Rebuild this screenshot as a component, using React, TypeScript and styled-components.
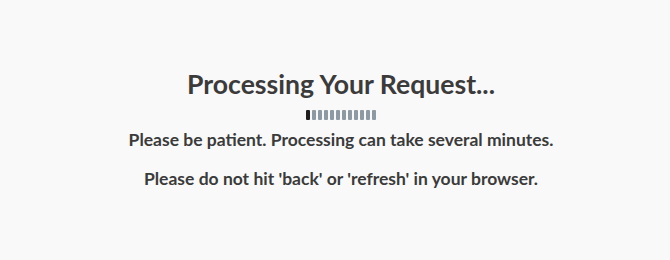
import React from 'react';
import styled, { createGlobalStyle } from 'styled-components';

const GlobalStyle = createGlobalStyle`
  html, body {
    margin: 0;
    padding: 0;
    background: #f9f9f9;
  }
  body {
    font-family: Lato, "Liberation Sans", sans-serif;
  }
`;

const Page = styled.div`
  height: 260px;
  display: flex;
  flex-direction: column;
  align-items: center;
  padding: 66px 0 0 12px;
  box-sizing: border-box;
  color: #3b3b3b;
`;

const Title = styled.h1`
  margin: 0;
  font-size: 26.6px;
  font-weight: 700;
  line-height: 36px;
`;

const Loader = styled.div`
  display: flex;
  gap: 2px;
  margin-top: 8px;
`;

const Bar = styled.span<{ $active?: boolean }>`
  width: 4px;
  height: 10px;
  border-radius: 1px;
  background: ${p => (p.$active ? '#1f1f1f' : '#8d99a3')};
`;

const Message = styled.p`
  margin: 0;
  font-size: 17.5px;
  font-weight: 700;
  line-height: 22px;
`;

const Messages = styled.div`
  display: flex;
  flex-direction: column;
  align-items: center;
  gap: 17px;
  margin-top: 9px;
`;

const App = () => (
  <>
    <GlobalStyle />
    <Page>
      <Title>Processing Your Request...</Title>
      <Loader>
        {Array.from({ length: 12 }, (_, i) => (
          <Bar key={i} $active={i === 0} />
        ))}
      </Loader>
      <Messages>
        <Message>Please be patient. Processing can take several minutes.</Message>
        <Message>Please do not hit 'back' or 'refresh' in your browser.</Message>
      </Messages>
    </Page>
  </>
);

export default App;
